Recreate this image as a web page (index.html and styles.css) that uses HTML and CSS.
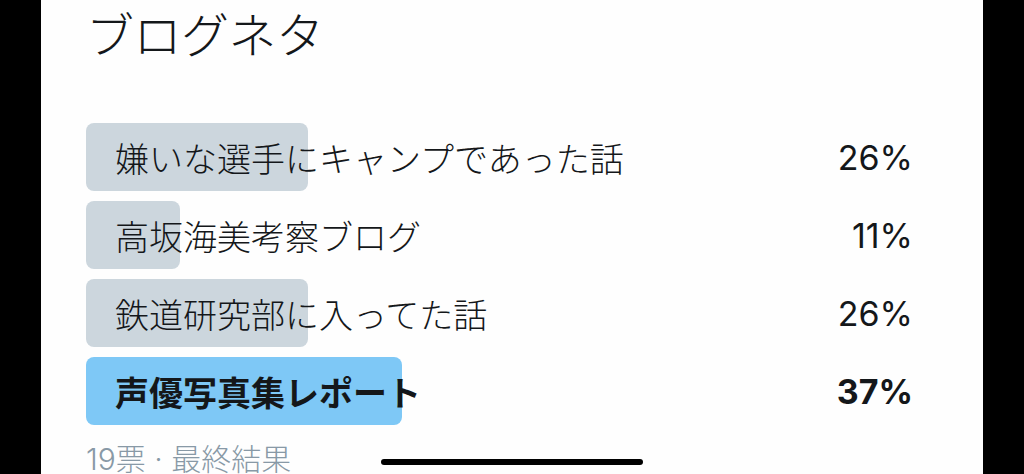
FILE: index.html
```html
<!DOCTYPE html>
<html lang="ja">
<head>
    <meta charset="UTF-8">
    <title>ブログネタ</title>
    <link rel="stylesheet" href="styles.css">
</head>
<body>
    <div class="screen">
        <div class="side"></div>

        <main class="card">
            <h1 class="title">ブログネタ</h1>

            <ul class="poll">
                <li class="choice">
                    <span class="bar" style="width: 26%"></span>
                    <span class="label">嫌いな選手にキャンプであった話</span>
                    <span class="pct">26%</span>
                </li>
                <li class="choice">
                    <span class="bar" style="width: 11%"></span>
                    <span class="label">高坂海美考察ブログ</span>
                    <span class="pct">11%</span>
                </li>
                <li class="choice">
                    <span class="bar" style="width: 26%"></span>
                    <span class="label">鉄道研究部に入ってた話</span>
                    <span class="pct">26%</span>
                </li>
                <li class="choice winner">
                    <span class="bar" style="width: 37%"></span>
                    <span class="label">声優写真集レポート</span>
                    <span class="pct">37%</span>
                </li>
            </ul>

            <p class="meta">19票 · 最終結果</p>

            <div class="home-indicator"></div>
        </main>

        <div class="side"></div>
    </div>
</body>
</html>
```

FILE: styles.css
```css
:root {
    --text: #14171a;
    --muted: #8899a6;
    --bar: #ccd6dd;
    --bar-win: #7ec8f6;
}

html, body {
    margin: 0;
    height: 100%;
    background: #000;
}

body {
    font-family: Inter, "Noto Sans CJK JP", sans-serif;
    color: var(--text);
    overflow: hidden;
}

.screen {
    display: flex;
    height: 474px;
}

.side {
    width: 41px;
    background: #000;
    flex-shrink: 0;
}

.card {
    flex: 1;
    background: #fefefe;
    padding: 0 43px 0 45px;
    position: relative;
    overflow: hidden;
}

.title {
    margin: 11px 0 0;
    font-size: 48px;
    line-height: 50px;
    font-weight: 300;
    letter-spacing: -0.5px;
}

.poll {
    list-style: none;
    margin: 62px 0 0;
    padding: 0;
    display: flex;
    flex-direction: column;
    gap: 10px;
}

.choice {
    position: relative;
    height: 68px;
    display: flex;
    align-items: center;
    justify-content: space-between;
    padding: 0 27px 0 29px;
    font-size: 34px;
    font-weight: 300;
}

/* result bar sits behind the label */
.bar {
    position: absolute;
    left: 0;
    top: 0;
    bottom: 0;
    background: var(--bar);
    border-radius: 8px;
}

.label, .pct {
    position: relative;
}

.pct {
    font-size: 34px;
    font-weight: 400;
}

.winner .bar {
    background: var(--bar-win);
}

.winner .label, .winner .pct {
    font-weight: 700;
}

.meta {
    margin: 14px 0 0;
    font-size: 30px;
    line-height: 40px;
    font-weight: 300;
    color: var(--muted);
}

.home-indicator {
    position: absolute;
    left: 340px;
    bottom: 9px;
    width: 262px;
    height: 6px;
    border-radius: 3px;
    background: #000;
}
```
